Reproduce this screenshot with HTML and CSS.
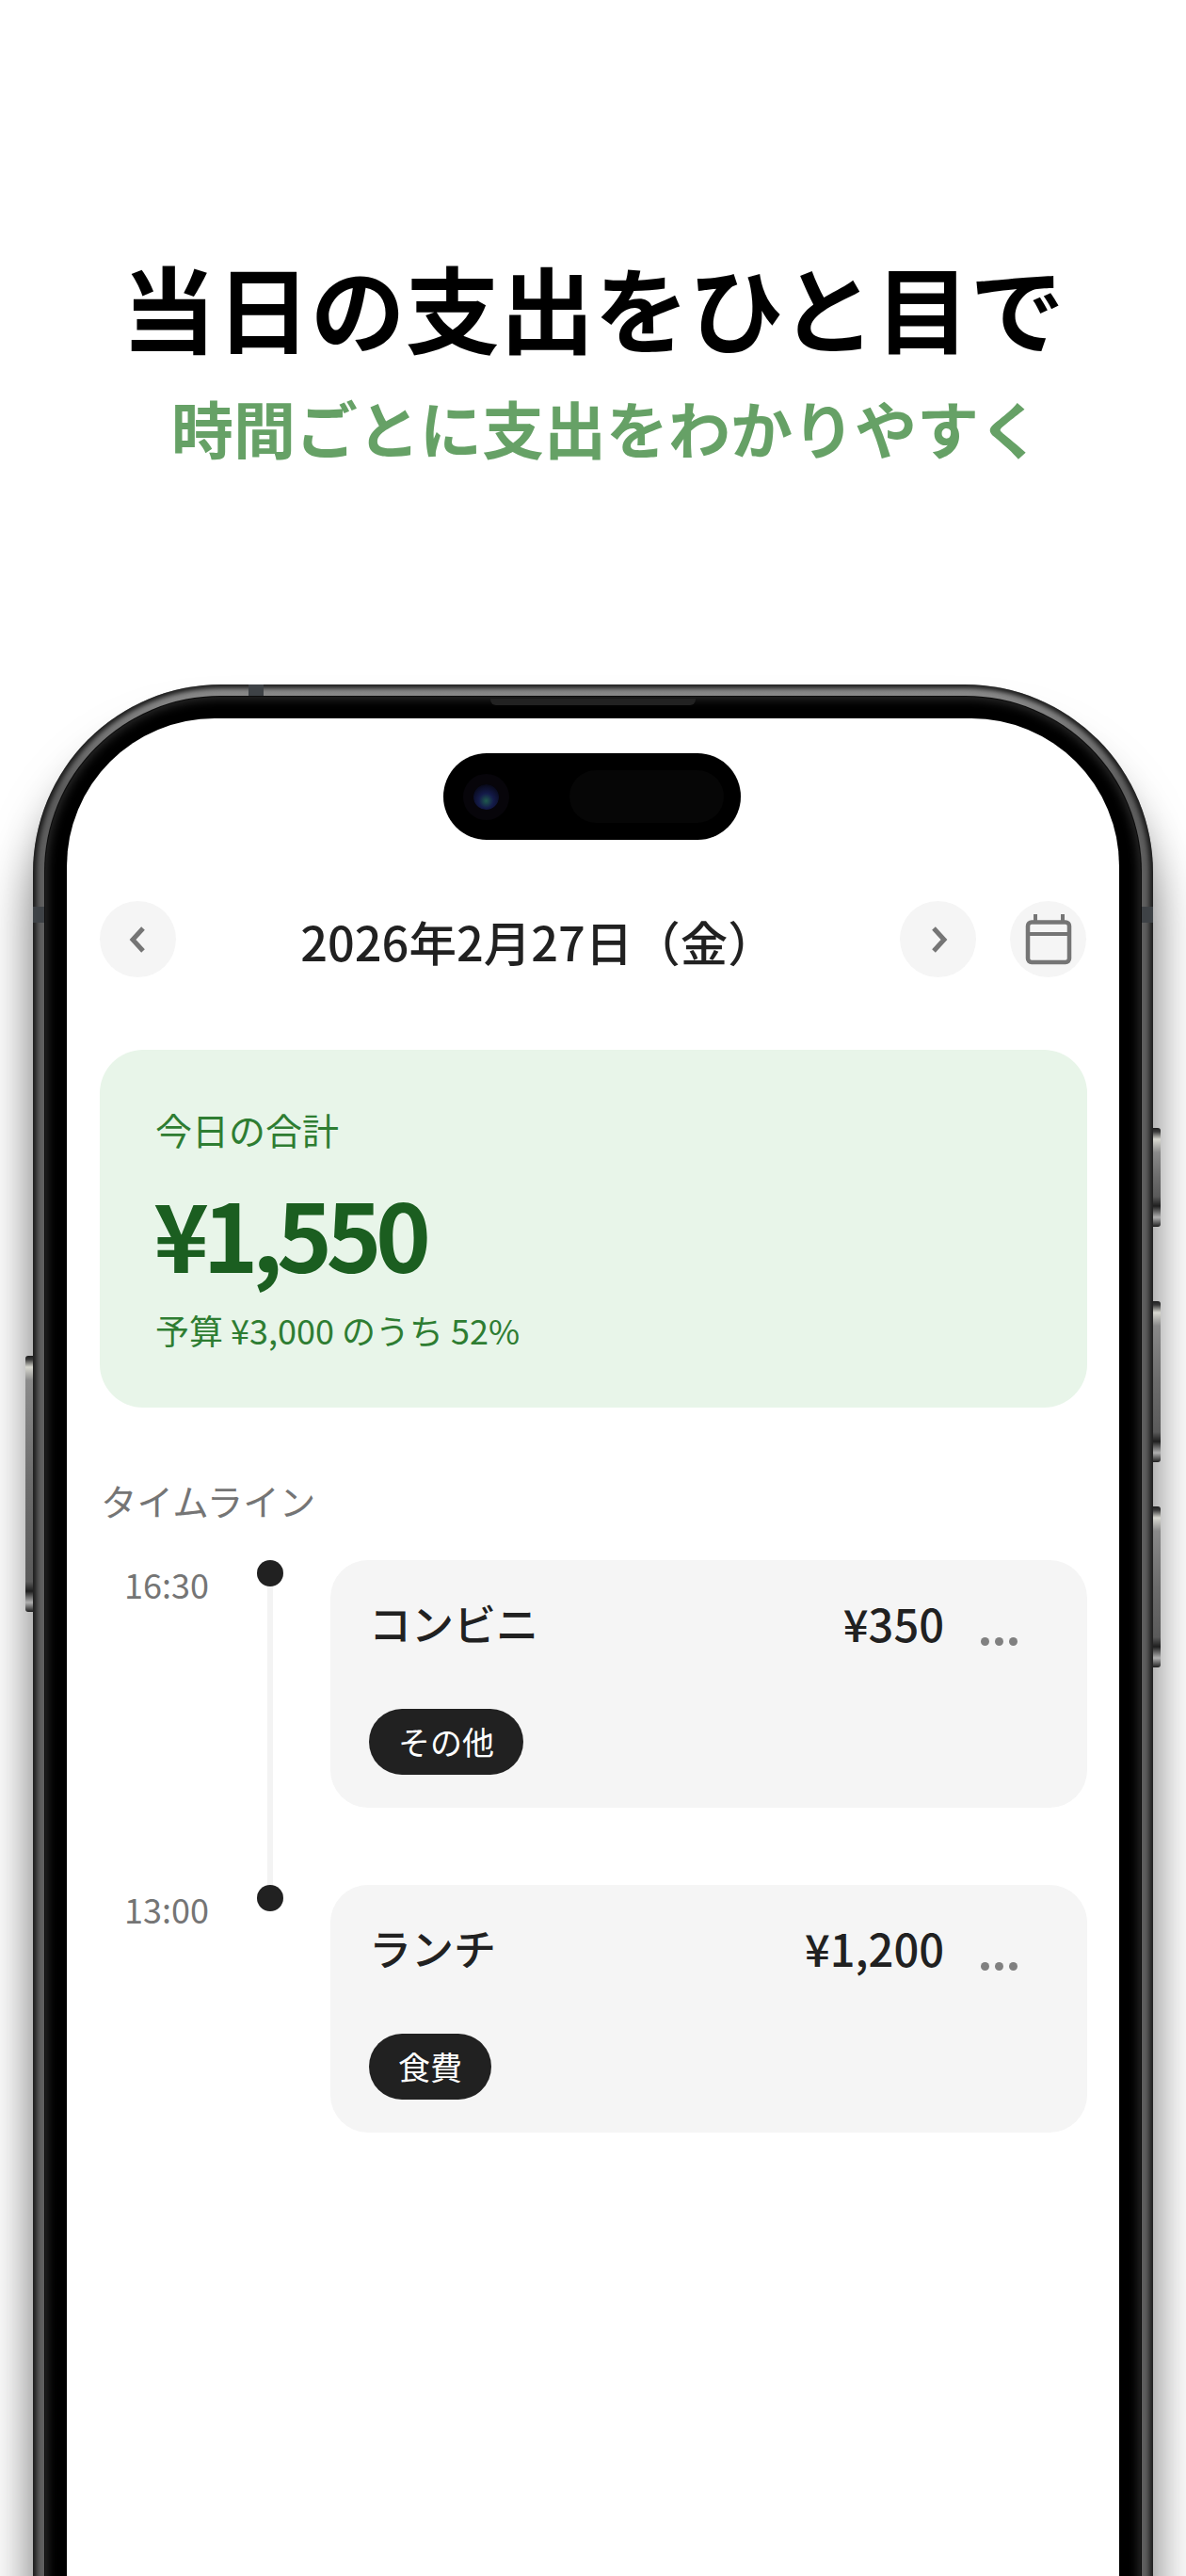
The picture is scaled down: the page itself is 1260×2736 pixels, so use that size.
FILE: index.html
```html
<!DOCTYPE html>
<html lang="ja">
<head>
    <meta charset="UTF-8">
    <meta name="viewport" content="width=device-width, initial-scale=1.0">
    <title>当日の支出をひと目で</title>
    <link rel="stylesheet" href="styles.css">
</head>
<body>
    <header class="promo">
        <h1>当日の支出をひと目で</h1>
        <p>時間ごとに支出をわかりやすく</p>
    </header>

    <div class="phone">
        <span class="side-btn side-left"></span>
        <span class="side-btn side-r1"></span>
        <span class="side-btn side-r2"></span>
        <span class="side-btn side-r3"></span>
        <span class="band band-top"></span>
        <span class="band band-left"></span>
        <span class="band band-right"></span>
        <div class="bezel">
            <span class="speaker"></span>
            <div class="screen">
                <div class="island">
                    <span class="lens"></span>
                    <span class="sensor"></span>
                </div>

                <div class="date-nav">
                    <button class="round-btn">
                        <svg width="26" height="30" viewBox="0 0 26 30"><path d="M18 3 L7 15 L18 27" fill="none" stroke="#757575" stroke-width="5"/></svg>
                    </button>
                    <div class="date-title">2026年2月27日（金）</div>
                    <div class="date-actions">
                        <button class="round-btn">
                            <svg width="26" height="30" viewBox="0 0 26 30"><path d="M8 3 L19 15 L8 27" fill="none" stroke="#757575" stroke-width="5"/></svg>
                        </button>
                        <button class="round-btn">
                            <svg width="50" height="54" viewBox="0 0 50 54"><path d="M11 0 V8 M40 0 V8" stroke="#757575" stroke-width="4" fill="none"/><rect x="3" y="8.5" width="44" height="42.5" rx="4" fill="none" stroke="#757575" stroke-width="4.5"/><path d="M3 21 H47" stroke="#757575" stroke-width="4"/></svg>
                        </button>
                    </div>
                </div>

                <section class="total-card">
                    <div class="total-label">今日の合計</div>
                    <div class="total-amount">¥1,550</div>
                    <div class="total-note">予算 ¥3,000 のうち 52%</div>
                </section>

                <div class="timeline-label">タイムライン</div>

                <div class="timeline">
                    <div class="entry">
                        <div class="entry-time">16:30</div>
                        <div class="entry-rail"><span class="dot"></span><span class="rail-line"></span></div>
                        <div class="entry-card">
                            <div class="entry-top">
                                <div class="entry-name">コンビニ</div>
                                <div class="entry-amount">¥350</div>
                                <div class="entry-more"><i></i><i></i><i></i></div>
                            </div>
                            <span class="tag">その他</span>
                        </div>
                    </div>
                    <div class="entry">
                        <div class="entry-time">13:00</div>
                        <div class="entry-rail"><span class="dot"></span></div>
                        <div class="entry-card">
                            <div class="entry-top">
                                <div class="entry-name">ランチ</div>
                                <div class="entry-amount">¥1,200</div>
                                <div class="entry-more"><i></i><i></i><i></i></div>
                            </div>
                            <span class="tag">食費</span>
                        </div>
                    </div>
                </div>
            </div>
        </div>
    </div>
</body>
</html>
```

FILE: styles.css
```css
html, body {
    margin: 0;
    height: 2736px;
    overflow: hidden;
    background: #fff;
}
body {
    font-family: "Noto Sans CJK JP", "Noto Sans", sans-serif;
    color: #212121;
}
.promo {
    text-align: center;
    padding-top: 259px;
}
.promo h1 {
    margin: 0;
    font-size: 100.5px;
    line-height: 130px;
    font-weight: 700;
    color: #000;
}
.promo p {
    margin: 18px 0 0;
    padding-left: 28px;
    font-size: 66px;
    line-height: 92px;
    font-weight: 700;
    color: #66a166;
}

/* phone frame */
.phone {
    position: relative;
    box-sizing: border-box;
    width: 1190px;
    height: 2400px;
    margin: 228px 0 0 35px;
    padding: 13px;
    border-radius: 200px;
    background: linear-gradient(#8c8c8c 0, #5e5e5e 110px);
    box-shadow: inset 0 0 5px 4px #1d1d1d, 0 50px 50px rgba(0, 0, 0, 0.58);
}
.bezel {
    position: relative;
    box-sizing: border-box;
    height: 100%;
    padding: 23px;
    border-radius: 186px;
    background: #000;
    box-shadow: 0 0 0 1px #0c0c0c, inset 0 0 11px 2px #2e2e2e;
}
.screen {
    position: relative;
    box-sizing: border-box;
    height: 100%;
    padding: 194px 34px 0 35px;
    border-radius: 157px;
    background: #fff;
}
.speaker {
    position: absolute;
    top: 2px;
    left: 473px;
    width: 218px;
    height: 7px;
    border-radius: 0 0 6px 6px;
    background: #222;
}
.band {
    position: absolute;
    background: #3e4246;
}
.band-top { top: 0; left: 229px; width: 16px; height: 13px; }
.band-left { top: 236px; left: 0; width: 13px; height: 17px; }
.band-right { top: 236px; right: 0; width: 13px; height: 17px; }
.side-btn {
    position: absolute;
    width: 8px;
    background: linear-gradient(#1e1e1e 0, #3a3a3a 4px, #d8d8d0 12px, #8a8a8a 26px, #6c6c6c 50%, #5a5a5a calc(100% - 32px), #1e1e1e calc(100% - 22px), #b0b0b0 calc(100% - 10px), #1e1e1e 100%);
}
.side-left { left: -8px; top: 713px; height: 272px; border-radius: 3px 0 0 3px; }
.side-r1 { right: -8px; top: 471px; height: 105px; border-radius: 0 3px 3px 0; }
.side-r2 { right: -8px; top: 655px; height: 171px; border-radius: 0 3px 3px 0; }
.side-r3 { right: -8px; top: 873px; height: 171px; border-radius: 0 3px 3px 0; }

/* dynamic island */
.island {
    position: absolute;
    top: 37px;
    left: 400px;
    width: 316px;
    height: 92px;
    border-radius: 46px;
    background: #000;
}
.lens {
    position: absolute;
    top: 33px;
    left: 32px;
    width: 27px;
    height: 27px;
    border-radius: 50%;
    background: radial-gradient(circle at 50% 65%, #1f5a4c 0, #141b4a 35%, #0a0c22 70%, #000 100%);
    box-shadow: 0 0 0 11px #07050a;
}
.sensor {
    position: absolute;
    top: 18px;
    left: 134px;
    width: 164px;
    height: 56px;
    border-radius: 28px;
    background: #060606;
}

/* app */
.date-nav {
    display: flex;
    align-items: center;
    justify-content: space-between;
    margin-right: 1px;
}
.date-actions {
    display: flex;
    gap: 36px;
}
.round-btn {
    display: flex;
    align-items: center;
    justify-content: center;
    width: 81px;
    height: 81px;
    padding: 0;
    border: 0;
    border-radius: 50%;
    background: #f5f5f5;
}
.date-title {
    padding-top: 3px;
    font-size: 50.5px;
    font-weight: 500;
    line-height: 78px;
    white-space: nowrap;
}
.total-card {
    margin-top: 77px;
    padding: 57px 60px 58px 59px;
    border-radius: 46px;
    background: #e8f5e9;
}
.total-label {
    font-size: 39px;
    line-height: 54px;
    color: #2e7d32;
}
.total-amount {
    margin: 23px 0 0 -2px;
    font-size: 100px;
    line-height: 120px;
    font-weight: 700;
    letter-spacing: -6.5px;
    color: #1b5e20;
}
.total-note {
    margin-top: 18px;
    font-size: 36px;
    line-height: 50px;
    color: #2e7d32;
}
.timeline-label {
    margin: 71px 0 0 1px;
    font-size: 38.5px;
    line-height: 54px;
    color: #757575;
}
.timeline {
    margin-top: 37px;
}
.entry {
    display: flex;
    height: 345px;
}
.entry-time {
    box-sizing: border-box;
    width: 167px;
    padding: 0 0 0 26px;
    font-size: 36px;
    line-height: 50px;
    color: #757575;
}
.entry-rail {
    display: flex;
    flex-direction: column;
    align-items: center;
    width: 28px;
}
.dot {
    width: 28px;
    height: 28px;
    border-radius: 50%;
    background: #212121;
}
.rail-line {
    flex: 1;
    width: 6px;
    background: #f3f3f3;
}
.entry-card {
    box-sizing: border-box;
    flex: 1;
    height: 263px;
    margin-left: 50px;
    padding: 35px 74px 0 41px;
    border-radius: 40px;
    background: #f5f5f5;
}
.entry-top {
    display: flex;
    align-items: center;
}
.entry-name {
    flex: 1;
    font-size: 45px;
    line-height: 64px;
    font-weight: 500;
}
.entry-amount {
    font-size: 47px;
    line-height: 64px;
    font-weight: 500;
}
.entry-more {
    display: flex;
    gap: 6px;
    margin: 38px 0 0 39px;
}
.entry-more i {
    width: 9px;
    height: 9px;
    border-radius: 50%;
    background: #808080;
}
.tag {
    display: inline-block;
    margin-top: 59px;
    padding: 0 31px;
    border-radius: 35px;
    font-size: 34px;
    line-height: 70px;
    color: #fff;
    background: #212121;
}
```
